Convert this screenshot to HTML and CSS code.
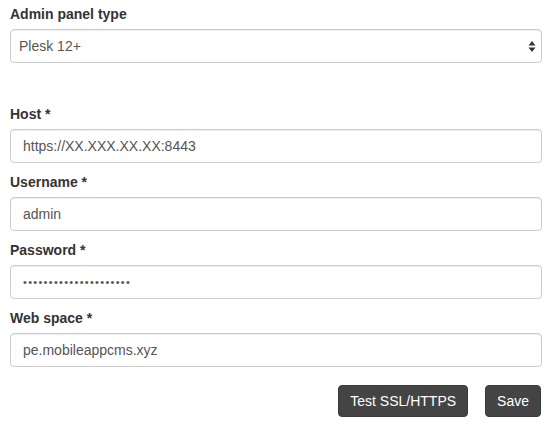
FILE: index.html
```html
<!DOCTYPE html>
<html lang="en">
<head>
    <meta charset="UTF-8">
    <meta name="viewport" content="width=device-width, initial-scale=1.0">
    <title>Admin panel settings</title>
    <link rel="stylesheet" href="styles.css">
</head>
<body>
    <form class="panel-form" id="panelForm">
        <div class="form-group panel-type">
            <label for="panel-type">Admin panel type</label>
            <div class="select-wrap">
                <select id="panel-type" name="panel_type">
                    <option>Plesk 12+</option>
                </select>
                <svg class="select-arrows" width="8" height="13" viewBox="0 0 8 13">
                    <path d="M4 1 L7.5 5.5 H0.5 Z" fill="#333"/>
                    <path d="M4 12 L7.5 7.5 H0.5 Z" fill="#333"/>
                </svg>
            </div>
        </div>
        <div class="form-group">
            <label for="host">Host *</label>
            <input type="text" id="host" name="host" value="https://XX.XXX.XX.XX:8443">
        </div>
        <div class="form-group">
            <label for="username">Username *</label>
            <input type="text" id="username" name="username" value="admin">
        </div>
        <div class="form-group">
            <label for="password">Password *</label>
            <input type="password" id="password" name="password" value="passwordpassword12345">
        </div>
        <div class="form-group">
            <label for="webspace">Web space *</label>
            <input type="text" id="webspace" name="webspace" value="pe.mobileappcms.xyz">
        </div>
        <div class="actions">
            <button type="button" class="btn">Test SSL/HTTPS</button>
            <button type="submit" class="btn">Save</button>
        </div>
    </form>
</body>
</html>
```

FILE: styles.css
```css
body {
    font-family: "Liberation Sans", Arial, sans-serif;
    font-size: 14px;
    color: #333;
    background: #fff;
    margin: 0;
    padding: 4px 14px 0 10px;
}
.form-group {
    margin-bottom: 9px;
}
.panel-type {
    margin-bottom: 41px;
}
label {
    display: block;
    font-weight: bold;
    line-height: 20px;
    margin-bottom: 5px;
}
input,
select {
    display: block;
    width: 100%;
    height: 34px;
    box-sizing: border-box;
    padding: 6px 12px;
    font-family: inherit;
    font-size: 14px;
    color: #555;
    background: #fff;
    border: 1px solid #ccc;
    border-radius: 4px;
    box-shadow: inset 0 1px 1px rgba(0, 0, 0, 0.075);
    outline: none;
}
input[type="password"] {
    font-size: 11px;
    letter-spacing: 1.3px;
}
select {
    -webkit-appearance: none;
    appearance: none;
    padding: 6px 8px;
}
.select-wrap {
    position: relative;
}
.select-arrows {
    position: absolute;
    right: 6px;
    top: 11px;
}
.actions {
    display: flex;
    justify-content: flex-end;
    gap: 17px;
    margin-top: 18px;
    padding-right: 1px;
}
.btn {
    height: 32px;
    padding: 5px 11px;
    font-family: inherit;
    font-size: 14px;
    color: #fff;
    background-color: #444;
    border: 1px solid #3a3a3a;
    border-radius: 4px;
    cursor: pointer;
}
```
